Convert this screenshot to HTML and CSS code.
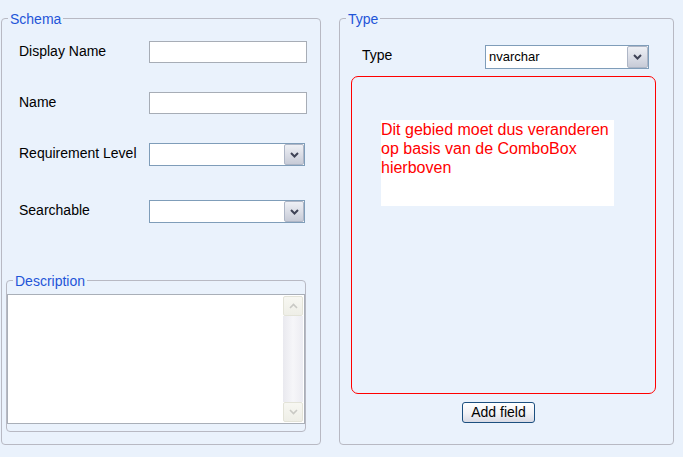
FILE: index.html
```html
<!DOCTYPE html>
<html>
<head>
<meta charset="utf-8">
<title>Schema</title>
<link rel="stylesheet" href="styles.css">
</head>
<body>
<div class="page">
  <fieldset class="group schema">
    <legend>Schema</legend>
    <div class="row r1"><label>Display Name</label><div class="textbox"></div></div>
    <div class="row r2"><label>Name</label><div class="textbox"></div></div>
    <div class="row r3"><label>Requirement Level</label>
      <div class="combo"><span class="value"></span><span class="drop"><svg width="9" height="6" viewBox="0 0 9 6"><polyline points="1,1 4.5,4.5 8,1" fill="none" stroke="#3f4356" stroke-width="2"/></svg></span></div>
    </div>
    <div class="row r4"><label>Searchable</label>
      <div class="combo"><span class="value"></span><span class="drop"><svg width="9" height="6" viewBox="0 0 9 6"><polyline points="1,1 4.5,4.5 8,1" fill="none" stroke="#3f4356" stroke-width="2"/></svg></span></div>
    </div>
    <fieldset class="group desc">
      <legend>Description</legend>
      <div class="memo">
        <div class="memo-text"></div>
        <div class="vscroll">
          <span class="sbtn"><svg width="9" height="6" viewBox="0 0 9 6"><polyline points="1,5 4.5,1.5 8,5" fill="none" stroke="#c9c9c4" stroke-width="1.6"/></svg></span>
          <span class="track"></span>
          <span class="sbtn"><svg width="9" height="6" viewBox="0 0 9 6"><polyline points="1,1 4.5,4.5 8,1" fill="none" stroke="#c9c9c4" stroke-width="1.6"/></svg></span>
        </div>
      </div>
    </fieldset>
  </fieldset>
  <fieldset class="group type">
    <legend>Type</legend>
    <div class="row type-row"><label>Type</label>
      <div class="combo wide"><span class="value">nvarchar</span><span class="drop"><svg width="9" height="6" viewBox="0 0 9 6"><polyline points="1,1 4.5,4.5 8,1" fill="none" stroke="#3f4356" stroke-width="2"/></svg></span></div>
    </div>
    <div class="dyn">
      <div class="note">Dit gebied moet dus veranderen op basis van de ComboBox hierboven</div>
    </div>
    <button class="btn">Add field</button>
  </fieldset>
</div>
</body>
</html>
```
FILE: styles.css
```css
html, body {
  margin: 0;
  background: #eaf2fc;
}
body {
  width: 683px;
  height: 457px;
  overflow: hidden;
  font-family: "Liberation Sans", Arial, sans-serif;
  font-size: 14px;
  color: #000;
}
.page {
  display: flex;
  align-items: flex-start;
  gap: 18px;
  padding: 9px 0 0 1px;
}
fieldset.group {
  margin: 0;
  padding: 0;
  border: 1px solid #b8b9c3;
  border-radius: 4px;
  box-sizing: border-box;
  min-width: 0;
}
legend {
  margin-left: 6px;
  padding: 2px 2px 0;
  font-size: 14px;
  line-height: 16px;
  color: #1f55d8;
}
fieldset.schema {
  width: 320px;
  height: 436px;
}
fieldset.type {
  width: 335px;
  height: 436px;
}
.row {
  display: flex;
  align-items: flex-start;
  padding-left: 17px;
}
.row label {
  width: 130px;
  padding-top: 2px;
  line-height: 16px;
  flex: none;
}
.r1 { margin-top: 14px; }
.r2 { margin-top: 29px; }
.r3 { margin-top: 29px; }
.r4 { margin-top: 34px; }
.textbox {
  width: 158px;
  height: 22px;
  box-sizing: border-box;
  border: 1px solid #a7adb6;
  background: #fff;
}
.combo {
  display: flex;
  width: 156px;
  height: 23px;
  box-sizing: border-box;
  border: 1px solid #7f9db9;
  background: #fff;
}
.combo .value {
  flex: 1;
  padding-left: 3px;
  font-size: 13px;
  line-height: 21px;
}
.combo .drop {
  width: 20px;
  box-sizing: border-box;
  border: 1px solid #aeb6c6;
  border-radius: 2px;
  background: linear-gradient(#eef0f5, #d9dce5 55%, #c7cbd7);
  display: flex;
  align-items: center;
  justify-content: center;
}
fieldset.desc {
  margin: 48px 0 0 4px;
  width: 300px;
  height: 161px;
}
.desc legend {
  margin-left: 6px;
}
.memo {
  display: flex;
  margin-top: 5px;
  height: 130px;
  box-sizing: border-box;
  border: 1px solid #a9afb8;
  background: #fff;
}
.memo-text {
  flex: 1;
}
.vscroll {
  display: flex;
  flex-direction: column;
  width: 20px;
  margin: 1px 1px 1px 0;
}
.sbtn {
  height: 20px;
  box-sizing: border-box;
  border: 1px solid #e3e3d8;
  border-radius: 2px;
  background: linear-gradient(#f7f7f2, #eeeee7);
  display: flex;
  align-items: center;
  justify-content: center;
}
.track {
  flex: 1;
  background: linear-gradient(to right, #e9e9ef, #f6f6f9 50%, #ececf2);
}
.type-row {
  margin-top: 18px;
  padding-left: 22px;
}
.type-row label {
  width: 123px;
}
.combo.wide {
  width: 164px;
  height: 24px;
}
.combo.wide .value {
  line-height: 22px;
  padding-left: 3px;
}
.combo.wide .drop {
  width: 21px;
}
.dyn {
  margin: 7px 0 0 11px;
  width: 305px;
  height: 318px;
  box-sizing: border-box;
  border: 1px solid #ff0000;
  border-radius: 7px;
  padding: 43px 0 0 29px;
}
.note {
  width: 233px;
  height: 86px;
  background: #fff;
  color: #ff0000;
  font-size: 16px;
  line-height: 19px;
}
.btn {
  display: block;
  margin: 8px 0 0 122px;
  width: 73px;
  height: 21px;
  padding: 0;
  box-sizing: border-box;
  border: 1px solid #1c4f7f;
  border-radius: 3px;
  background: linear-gradient(#ffffff, #f1f1f5 55%, #d9dbe5);
  font-family: "Liberation Sans", Arial, sans-serif;
  font-size: 14px;
  line-height: 19px;
  color: #000;
}
```
